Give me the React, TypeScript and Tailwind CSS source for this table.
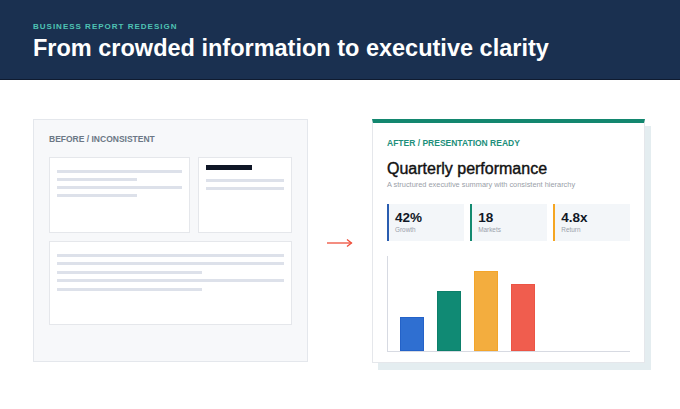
import React from "react";

const Line = ({ short = false }: { short?: boolean }) => (
  <div className={`h-[3px] bg-[#dde1ea] ${short ? "w-[64%]" : "w-full"}`} />
);

const stats = [
  { value: "42%", label: "Growth", border: "border-[#2a5db0]" },
  { value: "18", label: "Markets", border: "border-[#138a70]" },
  { value: "4.8x", label: "Return", border: "border-[#f5a623]" },
];

const bars = [
  { h: "h-[34px]", color: "bg-[#2f6fd1] border-[#2462c8]" },
  { h: "h-[60px]", color: "bg-[#108a74] border-[#0d7f6a]" },
  { h: "h-[80px]", color: "bg-[#f3ad3e] border-[#f3a52a]" },
  { h: "h-[67px]", color: "bg-[#f05d4e] border-[#ec5444]" },
];

export default function App() {
  return (
    <div className="w-[680px] h-[409px] bg-white font-['Liberation_Sans',Arial,sans-serif] overflow-hidden">
      {/* header */}
      <header className="h-[80px] bg-[#1a3050] border-b border-[#0f1b30] px-[33px] pt-[23px]">
        <p className="text-[8px] leading-none font-bold tracking-[1px] text-[#4fc3b4]">
          BUSINESS REPORT REDESIGN
        </p>
        <h1 className="mt-[6px] text-[23.5px] leading-none font-bold text-white">
          From crowded information to executive clarity
        </h1>
      </header>

      <main className="flex items-start px-[33px] pt-[39px]">
        {/* before */}
        <section className="w-[275px] h-[243px] bg-[#f7f8fa] border border-[#e4e7ec] px-[15px] pt-[15px]">
          <p className="text-[8.5px] leading-none font-bold text-[#6b7785]">BEFORE / INCONSISTENT</p>
          <div className="mt-[13px] flex gap-2 h-[76px]">
            <div className="w-[141px] bg-white border border-[#e5e7eb] px-[7px] pt-[12px] flex flex-col gap-[5.3px]">
              <Line />
              <Line short />
              <Line />
              <Line short />
            </div>
            <div className="flex-1 bg-white border border-[#e5e7eb] px-[7px] pt-[7px]">
              <div className="w-[46px] h-[5px] bg-[#0f1626]" />
              <div className="mt-[9px] flex flex-col gap-[5.3px]">
                <Line />
                <Line />
              </div>
            </div>
          </div>
          <div className="mt-[8.5px] h-[84px] bg-white border border-[#e5e7eb] px-[7px] pt-[11.5px] flex flex-col gap-[5.5px]">
            <Line />
            <Line />
            <Line short />
            <Line />
            <Line short />
          </div>
        </section>

        {/* arrow */}
        <div className="w-[64px] self-stretch flex items-center justify-center pt-[5px]">
          <svg width="26" height="10" viewBox="0 0 26 10" fill="none">
            <path d="M0 5H24.5" stroke="#ef4f3b" strokeWidth="1.3" />
            <path d="M20 1.5L24.5 5L20 8.5" stroke="#ef4f3b" strokeWidth="1.3" />
          </svg>
        </div>

        {/* after */}
        <section className="w-[273px] bg-white border border-[#e5e7eb] border-t-[4px] border-t-[#13876f] shadow-[6px_7px_0_#e4edf0] px-[14px] pt-[16px] pb-[10px]">
          <p className="text-[8.5px] leading-none font-bold text-[#1d8f7b]">AFTER / PRESENTATION READY</p>
          <h2 className="mt-[13.5px] text-[16px] leading-none font-medium text-[#111] [-webkit-text-stroke:0.4px_#111]">
            Quarterly performance
          </h2>
          <p className="mt-[4px] text-[7.4px] leading-none text-[#9aa0a8]">
            A structured executive summary with consistent hierarchy
          </p>
          <div className="mt-[15.5px] grid grid-cols-3 gap-[6.5px]">
            {stats.map((s) => (
              <div key={s.label} className={`h-[37px] bg-[#f3f6f9] border-l-2 ${s.border} pl-[6px] pt-[7px]`}>
                <div className="text-[13.5px] leading-none font-bold text-[#111827]">{s.value}</div>
                <div className="mt-[2.5px] text-[6.4px] leading-none text-[#9aa1ab]">{s.label}</div>
              </div>
            ))}
          </div>
          <div className="mt-[15px] h-[96px] border-l border-b-[1.5px] border-[#d7dae2] flex items-end gap-[13px] pl-[12px]">
            {bars.map((b, i) => (
              <div key={i} className={`w-[24px] border ${b.h} ${b.color}`} />
            ))}
          </div>
        </section>
      </main>
    </div>
  );
}
